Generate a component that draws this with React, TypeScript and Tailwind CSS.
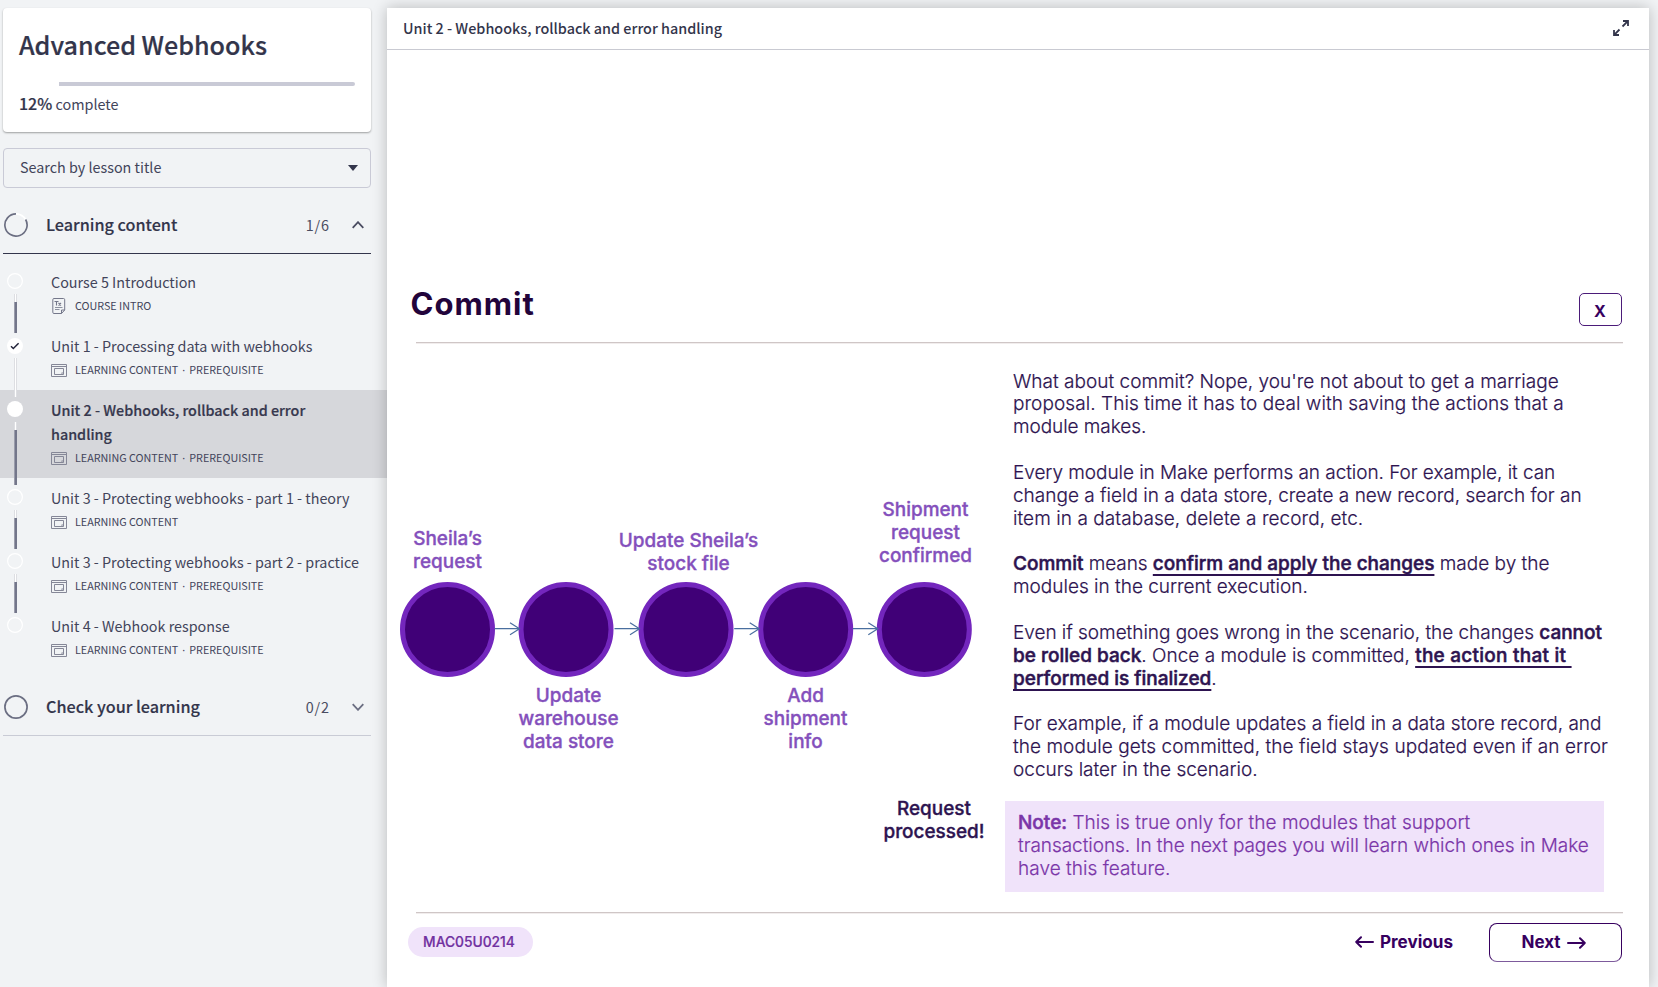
import type { ReactNode } from 'react';

type Status = 'empty' | 'done' | 'current';
type Lesson = {
  lines: string[];
  kind: 'intro' | 'content';
  meta: string[];
  status: Status;
};

const lessons: Lesson[] = [
  { lines: ['Course 5 Introduction'], kind: 'intro', meta: ['COURSE INTRO'], status: 'empty' },
  { lines: ['Unit 1 - Processing data with webhooks'], kind: 'content', meta: ['LEARNING CONTENT', 'PREREQUISITE'], status: 'done' },
  { lines: ['Unit 2 - Webhooks, rollback and error', 'handling'], kind: 'content', meta: ['LEARNING CONTENT', 'PREREQUISITE'], status: 'current' },
  { lines: ['Unit 3 - Protecting webhooks - part 1 - theory'], kind: 'content', meta: ['LEARNING CONTENT'], status: 'empty' },
  { lines: ['Unit 3 - Protecting webhooks - part 2 - practice'], kind: 'content', meta: ['LEARNING CONTENT', 'PREREQUISITE'], status: 'empty' },
  { lines: ['Unit 4 - Webhook response'], kind: 'content', meta: ['LEARNING CONTENT', 'PREREQUISITE'], status: 'empty' },
];

function DocIcon() {
  return (
    <svg className="ml-px" width="14" height="16" viewBox="0 0 14 16" fill="none" stroke="#74778a" strokeWidth="1">
      <path d="M2 .5h9.500a1.200 1.200 0 0 1 1.200 1.200V12l-3.200 3.500H2A1.200 1.200 0 0 1 .8 14.300V1.700A1.200 1.200 0 0 1 2 .5Z" />
      <path d="M9.500 15.500V12h3.200" />
      <path d="M2.500 3.500h4M4.500 3.500v4M6.500 5l2.500 2.500M9 5L6.500 7.500" strokeWidth="1.100" />
      <path d="M3 9.500h7.500M3 11.500h4.500" strokeWidth=".8" />
    </svg>
  );
}

function ContentIcon() {
  return (
    <svg width="16" height="13" viewBox="0 0 16 13" fill="none" stroke="#858797" strokeWidth="1">
      <path d="M.5.5h15v12H.5zM.5 2.500h15" />
      <path d="M3.500 4.500h9v6h-9z" />
      <path d="M12.500 8.500h-2v2z" fill="#858797" stroke="none" />
    </svg>
  );
}

function StatusDot({ status }: { status: Status }) {
  if (status === 'empty') {
    return (
      <svg width="16" height="16" viewBox="0 0 16 16" fill="none">
        <circle cx="8" cy="8" r="7.400" stroke="#fff" strokeWidth="1.200" />
      </svg>
    );
  }
  return (
    <div className={`flex size-4 items-center justify-center rounded-full bg-white ${status === 'done' ? 'mt-px' : ''}`}>
      {status === 'done' && (
        <svg width="10" height="8" viewBox="0 0 10 8" fill="none" stroke="#23243a" strokeWidth="1.500">
          <path d="M1 4.300l2.300 2.200L8.600 1.200" />
        </svg>
      )}
    </div>
  );
}

function LessonRow({ lesson, last }: { lesson: Lesson; last: boolean }) {
  const current = lesson.status === 'current';
  return (
    <li className={`relative flex py-2 ${current ? 'bg-[#d6d7db]' : ''}`}>
      <div className="ml-[7px] w-11 pt-[3px]">
        <StatusDot status={lesson.status} />
      </div>
      {!last && (
        <div className="absolute top-8 -bottom-[7px] left-[14px] z-10 flex w-[3px] flex-col border-x border-[#dddee2] bg-white">
          {lesson.status !== 'done' && <div className="-mx-px mt-2 flex-1 border-l border-[#9a9cab] bg-[#73768a]" />}
        </div>
      )}
      <div className="text-[#42445a]">
        <div className={`text-[14.350px] leading-6 whitespace-nowrap ${current ? 'font-medium text-[#36384e] [-webkit-text-stroke:0.2px]' : ''}`}>
          {lesson.lines.map((l) => (
            <div key={l}>{l}</div>
          ))}
        </div>
        <div className="flex h-6 items-center text-[10.750px] leading-6">
          <span className="mr-2 w-4">{lesson.kind === 'intro' ? <DocIcon /> : <ContentIcon />}</span>
          <span>{lesson.meta[0]}</span>
          {lesson.meta[1] && (
            <>
              <span className="w-[11px] text-center font-['Noto_Sans']">·</span>
              <span>{lesson.meta[1]}</span>
            </>
          )}
        </div>
      </div>
    </li>
  );
}

function SectionHeader({ title, count, open }: { title: string; count: string; open: boolean }) {
  return (
    <div className={`mt-[9px] mr-4 ml-[3px] flex h-[57px] items-center border-b ${open ? 'border-[#33354b]' : 'border-[#c9cbd5]'}`}>
      <svg className="ml-px" width="24" height="24" viewBox="0 0 24 24" fill="none" strokeWidth="1.700">
        <circle cx="12" cy="12" r="11.100" stroke={open ? '#fff' : '#6b6e82'} />
        {open && <path d="M21.600 6.450A11.100 11.100 0 1 1 12 .9" stroke="#6b6e82" />}
      </svg>
      <span className="mb-0.5 ml-[18px] flex-1 text-[16.200px] font-medium text-[#33354b] [-webkit-text-stroke:0.15px]">{title}</span>
      <span className="text-[14.400px] tracking-[0.9px] text-[#4a4c61]">{count}</span>
      <svg className="mr-[7px] ml-[22px]" width="12" height="8" viewBox="0 0 12 8" fill="none" stroke={open ? '#4a4c61' : '#6b6e82'} strokeWidth="1.800">
        <path d={open ? 'M.7 6.800L6 1.200l5.300 5.600' : 'M.7 1.200L6 6.800l5.300-5.600'} />
      </svg>
    </div>
  );
}

function Sidebar() {
  return (
    <aside className="w-[387px] shrink-0 pt-2">
      <section className="ml-[3px] h-[124px] w-[368px] rounded bg-white px-4 pt-4 shadow-[0_1px_2px_rgba(0,0,0,0.35)]">
        <h1 className="text-[25.100px] leading-10 font-medium text-[#33354b] [-webkit-text-stroke:0.2px]">Advanced Webhooks</h1>
        <div className="mt-[18px] flex h-1 w-[336px] justify-end overflow-hidden rounded-sm">
          <div className="w-[296px] bg-[#c9cad6]" />
        </div>
        <p className="mt-[7px] text-[14.400px] leading-5 text-[#42445a]">
          <span className="text-[16px] font-medium text-[#33354b] [-webkit-text-stroke:0.2px]">12%</span> complete
        </p>
      </section>
      <div className="mt-4 ml-[3px] flex h-10 w-[368px] items-center justify-between rounded border border-[#c9cad6] pr-3 pl-4 text-[14.350px] text-[#42445a]">
        <span className="mb-0.5">Search by lesson title</span>
        <svg width="10" height="6" viewBox="0 0 10 6" fill="#33354b">
          <path d="M0 0h10L5 6z" />
        </svg>
      </div>
      <SectionHeader title="Learning content" count="1/6" open />
      <ul className="mt-2">
        {lessons.map((l, i) => (
          <LessonRow key={i} lesson={l} last={i === lessons.length - 1} />
        ))}
      </ul>
      <SectionHeader title="Check your learning" count="0/2" open={false} />
    </aside>
  );
}

function Label({ place, children }: { place: string; children: ReactNode }) {
  return (
    <div className={`absolute w-40 -translate-x-1/2 text-center text-[18.950px] leading-[23px] font-medium whitespace-pre-line [-webkit-text-stroke:0.35px] ${place}`}>
      {children}
    </div>
  );
}

const nodeX = [60.5, 179, 299, 418.7, 537.3];

function Diagram() {
  return (
    <div className="relative w-[618px] shrink-0 text-[#8450bc]">
      <svg className="absolute top-[236px] left-0" width="618" height="100" viewBox="0 0 618 100" fill="none">
        {nodeX.map((x) => (
          <circle key={x} cx={x} cy="49.400" r="45" fill="#400077" stroke="#7326bd" strokeWidth="5" />
        ))}
        {nodeX.slice(1).map((x) => (
          <path key={x} d={`M${x - 71.5} 48.700H${x - 46.5}M${x - 56} 42.700l9.500 6l-9.500 6`} stroke="#4a6f9f" strokeWidth="1.200" />
        ))}
      </svg>
      <Label place="top-[183px] left-[60.500px]">{'Sheila’s\nrequest'}</Label>
      <Label place="top-[185px] left-[301.500px]">{'Update Sheila’s\nstock file'}</Label>
      <Label place="top-[154px] left-[538.500px]">{'Shipment\nrequest\nconfirmed'}</Label>
      <Label place="top-[340px] left-[181.500px]">{'Update\nwarehouse\ndata store'}</Label>
      <Label place="top-[340px] left-[418.500px]">{'Add\nshipment\ninfo'}</Label>
      <Label place="top-[453px] left-[547px] text-[#2d1350]">{'Request\nprocessed!'}</Label>
    </div>
  );
}

function Strong({ children, underline }: { children: ReactNode; underline?: boolean }) {
  return (
    <strong className={`font-medium [-webkit-text-stroke:0.5px] ${underline ? 'underline decoration-[1.500px] underline-offset-[4px] [text-decoration-skip-ink:none]' : ''}`}>
      {children}
    </strong>
  );
}

function Copy() {
  return (
    <div className="pt-[26.600px] text-[19px] leading-[22.850px] font-light whitespace-nowrap text-[#2d1350] [-webkit-text-stroke:0.2px]">
      <div className="flex flex-col gap-[22.850px] pl-2">
        <p>
          <span className="tracking-[0.015px]">What about commit? Nope, you're not about to get a marriage</span><br />
          <span className="tracking-[0.070px]">proposal. This time it has to deal with saving the actions that a</span><br />
          <span className="tracking-[-0.060px]">module makes.</span>
        </p>
        <p>
          <span className="tracking-[-0.050px]">Every module in Make performs an action. For example, it can</span><br />
          change a field in a data store, create a new record, search for an<br />
          <span className="tracking-[0.070px]">item in a database, delete a record, etc.</span>
        </p>
        <p>
          <Strong>Commit</Strong> <span className="tracking-[-0.100px]">means</span> <Strong underline>confirm and apply the changes</Strong> made by the<br />
          modules in the current execution.
        </p>
        <p>
          <span className="tracking-[-0.035px]">Even if something goes wrong in the scenario, the changes <Strong>cannot</Strong></span><br />
          <Strong>be rolled back</Strong>. <span className="tracking-[0.020px]">Once a module is committed,</span> <Strong underline><span className="tracking-[0.250px]">the action that it&nbsp;</span></Strong><br />
          <Strong underline>performed is finalized</Strong>.
        </p>
        <p>
          For example, if a module updates a field in a data store record, and<br />
          <span className="tracking-[0.060px]">the module gets committed, the field stays updated even if an error</span><br />
          occurs later in the scenario.
        </p>
      </div>
      <div className="mt-[19px] h-[91px] w-[599px] bg-[#f0e3fa] pt-[11.500px] pl-[13px] text-[#7a35a8]">
        <Strong>Note:</Strong> <span className="tracking-[0.055px]">This is true only for the modules that support</span><br />
        <span className="tracking-[-0.040px]">transactions. In the next pages you will learn which ones in Make</span><br />
        <span className="tracking-[0.040px]">have this feature.</span>
      </div>
    </div>
  );
}

function Rule() {
  return <div className="mr-[26px] ml-[29px] h-0.5 shrink-0 border-b border-[#f1eded] bg-[#cfc6c6]" />;
}

function Arrow({ left }: { left?: boolean }) {
  return (
    <svg width="19" height="12" viewBox="0 0 19 12" fill="none" stroke="#37005f" strokeWidth="2" strokeLinecap="round" strokeLinejoin="round">
      <path d={left ? 'M18 6H1.200M6 1.200L1.200 6L6 10.800' : 'M1 6h16.800M13 1.200L17.800 6L13 10.800'} />
    </svg>
  );
}

export default function App() {
  return (
    <div className="flex h-[987px] w-[1658px] overflow-hidden bg-[#f1f3f5] font-['Noto_Sans_CJK_SC','Noto_Sans',sans-serif]">
      <Sidebar />
      <main className="relative z-20 mt-2 flex w-[1262px] flex-col bg-white shadow-[0_0_14px_rgba(0,0,0,0.24)]">
        <header className="flex h-[42px] shrink-0 items-center justify-between border-b border-[#c9cad2] pr-5 pl-4">
          <span className="mb-0.5 text-[14.380px] font-medium text-[#33354b]">Unit 2 - Webhooks, rollback and error handling</span>
          <svg className="mb-px" width="16" height="16" viewBox="0 0 16 16" fill="none" stroke="#33354b" strokeWidth="1.800">
            <path d="M9.500 6.500L14.800 1.200M10 1h5v5M6.500 9.500L1.200 14.800M1 10v5h5" />
          </svg>
        </header>
        <div className="flex flex-1 flex-col font-['Inter','Liberation_Sans',sans-serif]">
          <div className="flex h-[292px] shrink-0 items-end justify-between pr-[27px] pl-[23.500px]">
            <h2 className="mb-[18.500px] text-[31px] leading-10 font-bold tracking-[1px] text-[#22043b]">Commit</h2>
            <button className="mb-4 flex h-[33px] w-[43px] items-center justify-center rounded-[5px] border-[1.500px] border-[#4b1b79] pt-0.5 pr-px text-base font-bold text-[#37005f]">
              X
            </button>
          </div>
          <Rule />
          <div className="flex h-[568px] shrink-0">
            <Diagram />
            <Copy />
          </div>
          <Rule />
          <footer className="flex items-center pt-[9px] pr-[27px] pl-[21px] text-[#37005f]">
            <span className="mb-[2px] flex h-[30px] w-[125px] items-center justify-center rounded-full bg-[#f0e3fa] pt-px pr-[3px] text-[13.800px] font-medium text-[#7030a0] [-webkit-text-stroke:0.2px]">
              MAC05U0214
            </span>
            <button className="mr-9 ml-auto flex items-center gap-[5.500px] pb-px text-[17.100px] font-bold">
              <Arrow left />
              Previous
            </button>
            <button className="flex h-[39px] w-[133px] items-center justify-center gap-[6px] rounded-lg border-[1.500px] border-[#37005f] border-b-[#7d5a9c] pt-px pr-[4px] text-[17px] font-bold">
              Next
              <Arrow />
            </button>
          </footer>
        </div>
      </main>
    </div>
  );
}
